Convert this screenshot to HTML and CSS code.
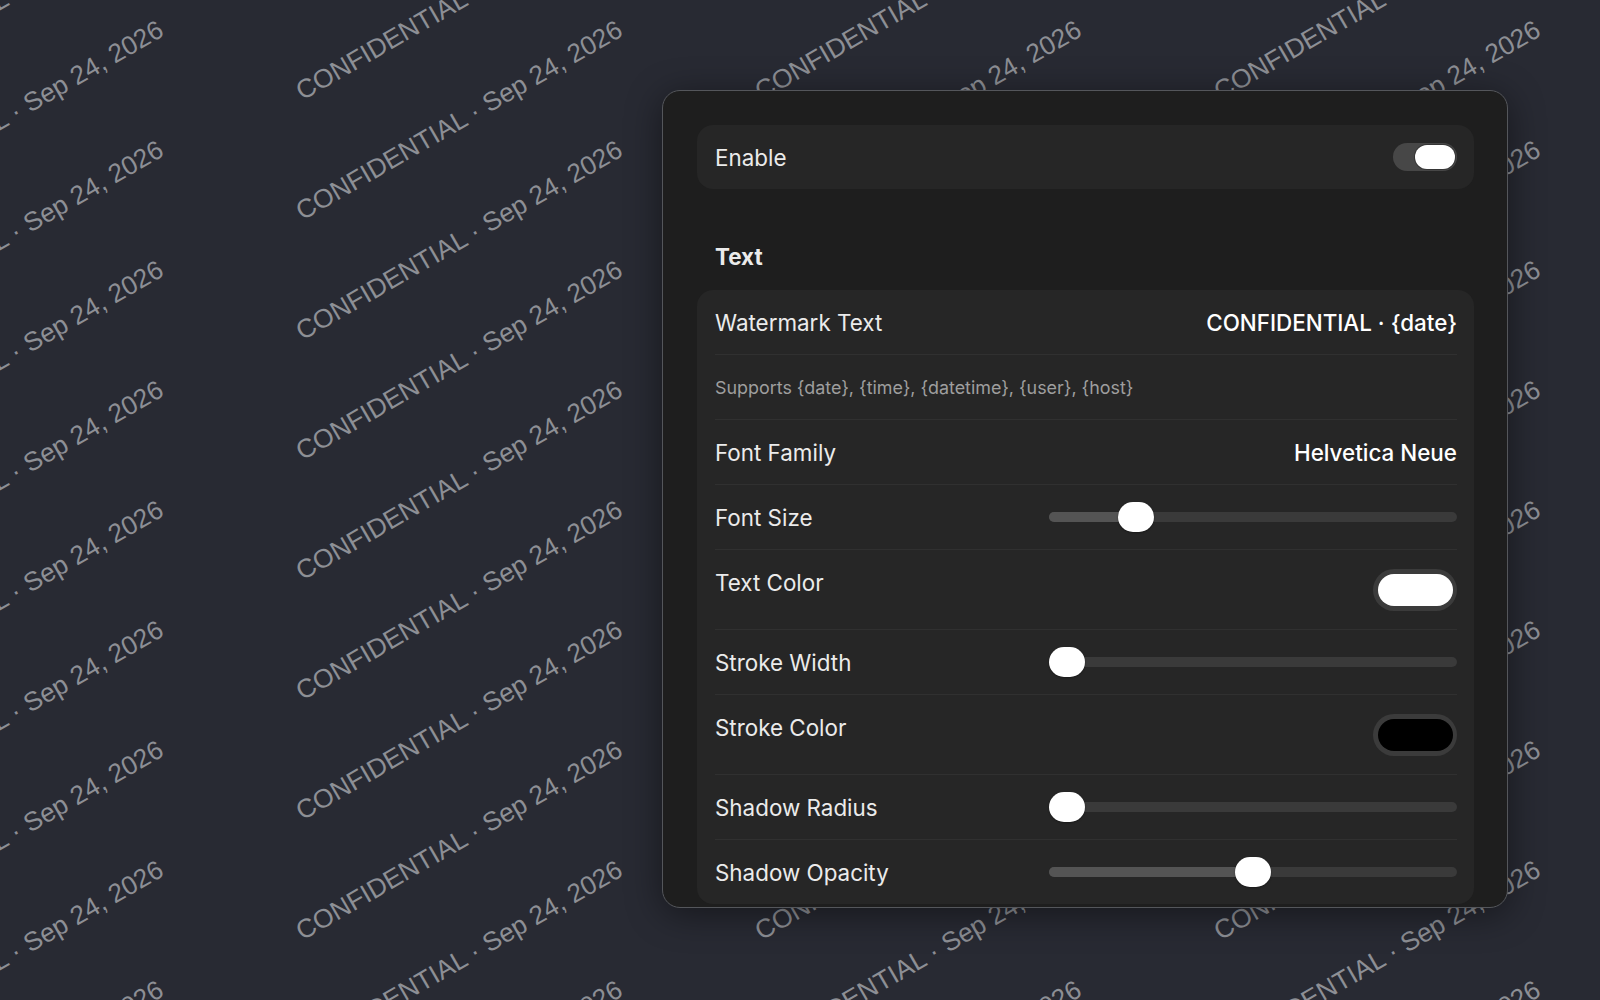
FILE: index.html
```html
<!DOCTYPE html>
<html lang="en">
<head>
<meta charset="utf-8">
<title>Watermark Settings</title>
<link rel="stylesheet" href="styles.css">
</head>
<body>
<div class="screen">
  <svg class="watermarks" width="1600" height="1000" viewBox="0 0 1600 1000" xmlns="http://www.w3.org/2000/svg">
    <g class="wm">
      <text transform="translate(0 0) rotate(-30)">CONFIDENTIAL · Sep 24, 2026</text>
      <text transform="translate(0 120) rotate(-30)">CONFIDENTIAL · Sep 24, 2026</text>
      <text transform="translate(0 240) rotate(-30)">CONFIDENTIAL · Sep 24, 2026</text>
      <text transform="translate(0 360) rotate(-30)">CONFIDENTIAL · Sep 24, 2026</text>
      <text transform="translate(0 480) rotate(-30)">CONFIDENTIAL · Sep 24, 2026</text>
      <text transform="translate(0 600) rotate(-30)">CONFIDENTIAL · Sep 24, 2026</text>
      <text transform="translate(0 720) rotate(-30)">CONFIDENTIAL · Sep 24, 2026</text>
      <text transform="translate(0 840) rotate(-30)">CONFIDENTIAL · Sep 24, 2026</text>
      <text transform="translate(0 960) rotate(-30)">CONFIDENTIAL · Sep 24, 2026</text>
      <text transform="translate(0 1080) rotate(-30)">CONFIDENTIAL · Sep 24, 2026</text>

      <text transform="translate(459 0) rotate(-30)">CONFIDENTIAL · Sep 24, 2026</text>
      <text transform="translate(459 120) rotate(-30)">CONFIDENTIAL · Sep 24, 2026</text>
      <text transform="translate(459 240) rotate(-30)">CONFIDENTIAL · Sep 24, 2026</text>
      <text transform="translate(459 360) rotate(-30)">CONFIDENTIAL · Sep 24, 2026</text>
      <text transform="translate(459 480) rotate(-30)">CONFIDENTIAL · Sep 24, 2026</text>
      <text transform="translate(459 600) rotate(-30)">CONFIDENTIAL · Sep 24, 2026</text>
      <text transform="translate(459 720) rotate(-30)">CONFIDENTIAL · Sep 24, 2026</text>
      <text transform="translate(459 840) rotate(-30)">CONFIDENTIAL · Sep 24, 2026</text>
      <text transform="translate(459 960) rotate(-30)">CONFIDENTIAL · Sep 24, 2026</text>
      <text transform="translate(459 1080) rotate(-30)">CONFIDENTIAL · Sep 24, 2026</text>

      <text transform="translate(918 0) rotate(-30)">CONFIDENTIAL · Sep 24, 2026</text>
      <text transform="translate(918 120) rotate(-30)">CONFIDENTIAL · Sep 24, 2026</text>
      <text transform="translate(918 240) rotate(-30)">CONFIDENTIAL · Sep 24, 2026</text>
      <text transform="translate(918 360) rotate(-30)">CONFIDENTIAL · Sep 24, 2026</text>
      <text transform="translate(918 480) rotate(-30)">CONFIDENTIAL · Sep 24, 2026</text>
      <text transform="translate(918 600) rotate(-30)">CONFIDENTIAL · Sep 24, 2026</text>
      <text transform="translate(918 720) rotate(-30)">CONFIDENTIAL · Sep 24, 2026</text>
      <text transform="translate(918 840) rotate(-30)">CONFIDENTIAL · Sep 24, 2026</text>
      <text transform="translate(918 960) rotate(-30)">CONFIDENTIAL · Sep 24, 2026</text>
      <text transform="translate(918 1080) rotate(-30)">CONFIDENTIAL · Sep 24, 2026</text>

      <text transform="translate(1377 0) rotate(-30)">CONFIDENTIAL · Sep 24, 2026</text>
      <text transform="translate(1377 120) rotate(-30)">CONFIDENTIAL · Sep 24, 2026</text>
      <text transform="translate(1377 240) rotate(-30)">CONFIDENTIAL · Sep 24, 2026</text>
      <text transform="translate(1377 360) rotate(-30)">CONFIDENTIAL · Sep 24, 2026</text>
      <text transform="translate(1377 480) rotate(-30)">CONFIDENTIAL · Sep 24, 2026</text>
      <text transform="translate(1377 600) rotate(-30)">CONFIDENTIAL · Sep 24, 2026</text>
      <text transform="translate(1377 720) rotate(-30)">CONFIDENTIAL · Sep 24, 2026</text>
      <text transform="translate(1377 840) rotate(-30)">CONFIDENTIAL · Sep 24, 2026</text>
      <text transform="translate(1377 960) rotate(-30)">CONFIDENTIAL · Sep 24, 2026</text>
      <text transform="translate(1377 1080) rotate(-30)">CONFIDENTIAL · Sep 24, 2026</text>
    </g>
  </svg>

  <div class="panel">
    <div class="card enable-card">
      <span class="label">Enable</span>
      <div class="toggle"><div class="knob"></div></div>
    </div>

    <div class="section-title">Text</div>

    <div class="card list">
      <div class="row">
        <span class="label">Watermark Text</span>
        <span class="value">CONFIDENTIAL · {date}</span>
      </div>
      <div class="row">
        <span class="hint">Supports {date}, {time}, {datetime}, {user}, {host}</span>
      </div>
      <div class="row">
        <span class="label">Font Family</span>
        <span class="value">Helvetica Neue</span>
      </div>
      <div class="row">
        <span class="label">Font Size</span>
        <div class="slider">
          <div class="track"><div class="fill" style="width:87px"></div></div>
          <div class="thumb" style="left:69px"></div>
        </div>
      </div>
      <div class="row color-row">
        <span class="label">Text Color</span>
        <div class="swatch"><div class="swatch-fill white"></div></div>
      </div>
      <div class="row">
        <span class="label">Stroke Width</span>
        <div class="slider">
          <div class="track"><div class="fill" style="width:0px"></div></div>
          <div class="thumb" style="left:0px"></div>
        </div>
      </div>
      <div class="row color-row">
        <span class="label">Stroke Color</span>
        <div class="swatch"><div class="swatch-fill black"></div></div>
      </div>
      <div class="row">
        <span class="label">Shadow Radius</span>
        <div class="slider">
          <div class="track"><div class="fill" style="width:0px"></div></div>
          <div class="thumb" style="left:0px"></div>
        </div>
      </div>
      <div class="row last">
        <span class="label">Shadow Opacity</span>
        <div class="slider">
          <div class="track"><div class="fill" style="width:204px"></div></div>
          <div class="thumb" style="left:186px"></div>
        </div>
      </div>
    </div>
  </div>
</div>
</body>
</html>
```

FILE: styles.css
```css
html, body {
  margin: 0;
  padding: 0;
  background: #282a33;
}

.screen {
  position: relative;
  width: 1600px;
  height: 1000px;
  overflow: hidden;
  box-sizing: border-box;
  padding: 90px 0 0 662px;
  background: #282a33;
  font-family: Inter, "Noto Sans", "Liberation Sans", sans-serif;
}

.watermarks {
  position: absolute;
  left: 0;
  top: 0;
}

.wm {
  font-family: "Liberation Sans", Arial, sans-serif;
  font-size: 26.3px;
  fill: #8d8f95;
  text-anchor: middle;
  dominant-baseline: central;
}

.panel {
  position: relative;
  z-index: 1;
  width: 846px;
  height: 818px;
  box-sizing: border-box;
  padding: 34px 33px 0 34px;
  background: #1e1e1e;
  border: 1px solid #54565b;
  border-radius: 18px;
  overflow: hidden;
  box-shadow: 0 6px 36px rgba(0, 0, 0, 0.45);
}

.card {
  background: #262626;
  border-radius: 16px;
}

.enable-card {
  height: 64px;
  box-sizing: border-box;
  padding: 0 17px 0 18px;
  display: flex;
  align-items: center;
  justify-content: space-between;
}

.label {
  font-size: 22.4px;
  color: #ebebeb;
}

.toggle {
  width: 64px;
  height: 28px;
  box-sizing: border-box;
  padding: 2px;
  border-radius: 14px;
  background: #474747;
  display: flex;
  justify-content: flex-end;
  align-items: center;
}

.knob {
  width: 40px;
  height: 24px;
  border-radius: 12px;
  background: #ffffff;
  box-shadow: 0 0 0 1px rgba(0, 0, 0, 0.25);
}

.section-title {
  padding: 55px 0 20px 18px;
  line-height: 26px;
  font-size: 22.4px;
  font-weight: 700;
  color: #ebebeb;
}

.list {
  padding: 0 17px 0 18px;
}

.row {
  display: flex;
  align-items: center;
  justify-content: space-between;
  min-height: 64px;
  border-bottom: 1px solid #303030;
}

.row.last {
  border-bottom: none;
}

.row .label {
  align-self: flex-start;
  height: 64px;
  display: flex;
  align-items: center;
}

.value {
  font-size: 22.4px;
  font-weight: 500;
  color: #ffffff;
}

.hint {
  font-size: 17.9px;
  color: #9e9e9e;
}

.slider {
  position: relative;
  width: 408px;
  height: 30px;
}

.track {
  position: absolute;
  left: 0;
  right: 0;
  top: 10px;
  height: 10px;
  border-radius: 5px;
  background: #3a3a3a;
  overflow: hidden;
}

.fill {
  height: 100%;
  background: #545454;
}

.thumb {
  position: absolute;
  top: 0;
  width: 36px;
  height: 30px;
  border-radius: 15px;
  background: #ffffff;
  box-shadow: 0 1px 2px rgba(0, 0, 0, 0.35);
}

.swatch {
  margin: 18.5px 0;
  width: 84px;
  height: 42px;
  box-sizing: border-box;
  padding: 5px 4.5px;
  border-radius: 21px;
  background: #3b3b3b;
}

.swatch-fill {
  width: 100%;
  height: 100%;
  border-radius: 16px;
}

.swatch-fill.white {
  background: #ffffff;
}

.swatch-fill.black {
  background: #000000;
}
```
